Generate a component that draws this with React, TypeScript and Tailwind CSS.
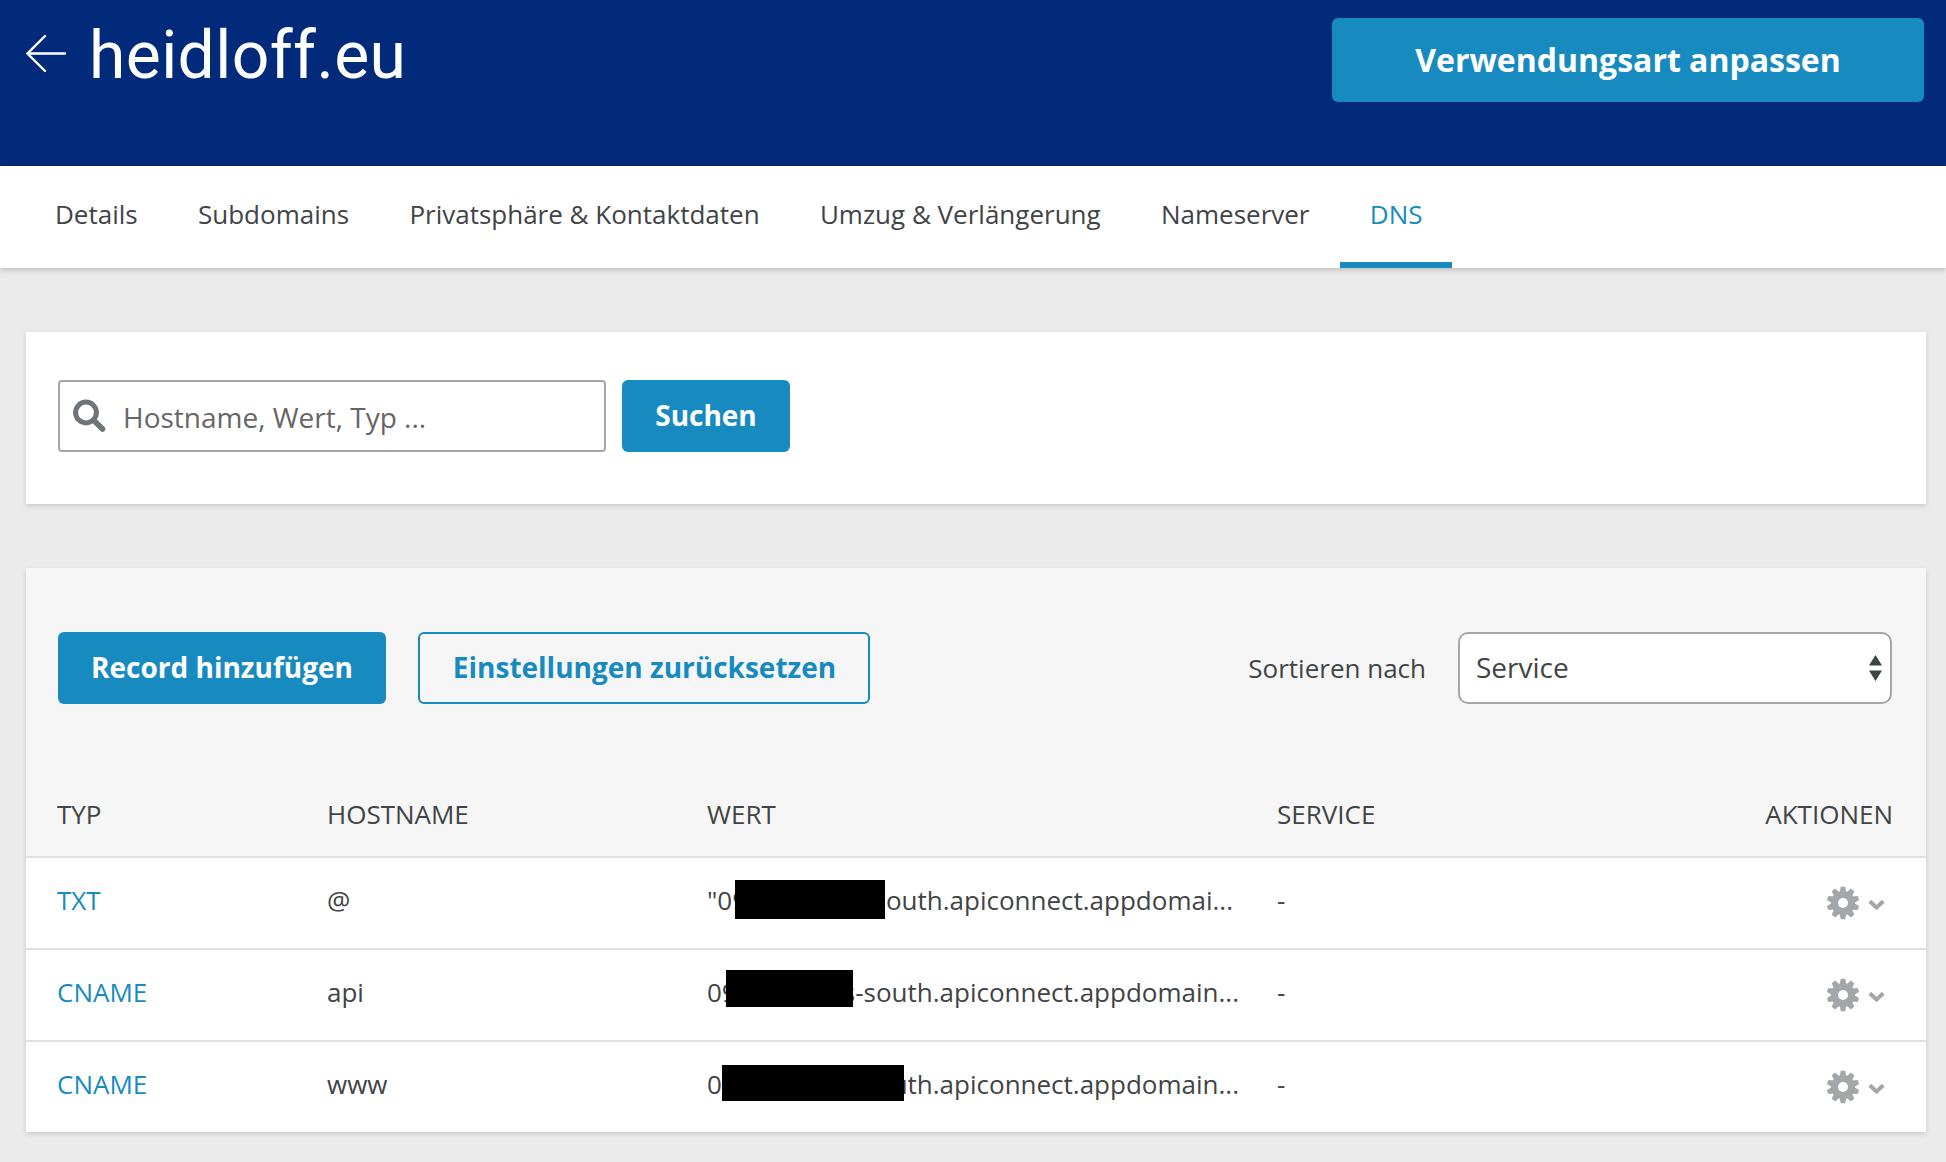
import React from "react";

const tabs = ["Details", "Subdomains", "Privatsphäre & Kontaktdaten", "Umzug & Verlängerung", "Nameserver", "DNS"];

const rows = [
  { typ: "TXT", host: "@", start: '"09', end: "outh.apiconnect.appdomai...", cell: "w-[526px]", block: "left-[28px] top-[22px] w-[150px] h-[39px]" },
  { typ: "CNAME", host: "api", start: "09", end: "s-south.apiconnect.appdomain...", cell: "w-[532px]", block: "left-[19px] top-[20px] w-[127px] h-[37px]" },
  { typ: "CNAME", host: "www", start: "0", end: "uth.apiconnect.appdomain...", cell: "w-[532px]", block: "left-[15px] top-[23px] w-[182px] h-[36px]" },
];

function Gear() {
  return (
    <svg width="34" height="34" viewBox="-17 -17 34 34" fill="#a3a7aa" fillRule="evenodd">
      <path d="M0-12A12 12 0 1 0 0 12A12 12 0 1 0 0-12ZM0-5A5 5 0 1 1 0 5A5 5 0 1 1 0-5Z" />
      {[0, 36, 72, 108, 144, 180, 216, 252, 288, 324].map((a) => (
        <path key={a} transform={`rotate(${a})`} d="M-3.4-10.5L-2.2-16.2H2.2L3.4-10.5Z" />
      ))}
    </svg>
  );
}

export default function App() {
  return (
    <div className="h-[1162px] w-[1946px] overflow-hidden bg-[#ebebeb] font-['Open_Sans',sans-serif] text-[26px] text-[#3f4447]">
      <header className="flex h-[166px] items-start justify-between bg-[#022a7a] pl-[26px] pr-[22px] pt-[18px] text-white">
        <div className="flex">
          <svg className="mt-[16px]" width="41" height="39" viewBox="0 0 41 39" fill="none" stroke="white" strokeWidth="2.4" strokeLinecap="round">
            <path d="M1.5 19.5H39M19 2L1.5 19.5L19 37" />
          </svg>
          <h1 className="ml-[22px] mt-[-4px] whitespace-nowrap font-['Roboto',sans-serif] text-[66px] leading-[84px] tracking-[0.4px] [font-variant-ligatures:none]">heidloff.eu</h1>
        </div>
        <button className="h-[84px] w-[592px] rounded-[6px] bg-[#178bc0] text-[32px] font-bold leading-[84px]">Verwendungsart anpassen</button>
      </header>
      <nav className="relative flex h-[102px] gap-[0.3px] bg-white pl-[25px] shadow-[0_2px_5px_rgba(0,0,0,0.2)]">
        {tabs.map((t) => (
          <a key={t} className={t === "DNS" ? "whitespace-nowrap border-b-[6px] border-[#178bc0] px-[30px] pt-[29px] text-[#178bc0]" : "whitespace-nowrap px-[30px] pt-[29px]"}>{t}</a>
        ))}
      </nav>
      <section className="ml-[26px] mt-[64px] flex h-[172px] w-[1900px] bg-white px-[32px] pt-[48px] shadow-[0_2px_5px_rgba(0,0,0,0.15)]">
        <div className="flex h-[72px] w-[548px] items-center rounded-[4px] border-2 border-[#a3a7aa] pl-[13px]">
          <svg width="34" height="34" viewBox="0 0 34 34" fill="none" stroke="#6f7477">
            <circle cx="13" cy="13.5" r="10.4" strokeWidth="5" />
            <path d="M21 21.5L29.5 30" strokeWidth="5.6" strokeLinecap="round" />
          </svg>
          <span className="ml-[16px] mt-[1px] text-[28px] text-[#666]">Hostname, Wert, Typ ...</span>
        </div>
        <button className="ml-[16px] h-[72px] w-[168px] rounded-[6px] bg-[#178bc0] pb-[2px] text-[28px] font-bold text-white">Suchen</button>
      </section>
      <section className="ml-[26px] mt-[64px] h-[564px] w-[1900px] bg-white shadow-[0_2px_5px_rgba(0,0,0,0.15)]">
        <div className="h-[288px] bg-[#f6f6f6] pt-[64px]">
          <div className="flex items-center pl-[32px] pr-[34px]">
            <button className="h-[72px] w-[328px] rounded-[6px] bg-[#178bc0] pb-[2px] text-[28px] font-bold text-white">Record hinzufügen</button>
            <button className="ml-[32px] h-[72px] w-[452px] rounded-[6px] border-2 border-[#178bc0] pb-[2px] pl-[1px] text-[28px] font-bold text-[#178bc0]">Einstellungen zurücksetzen</button>
            <span className="ml-auto">Sortieren nach</span>
            <div className="ml-[32px] flex h-[72px] w-[434px] items-center justify-between rounded-[10px] border-2 border-[#a3a7aa] bg-white pl-[16px] pr-[8px] text-[28px]">
              <span className="pb-[2px]">Service</span>
              <svg width="13" height="26" viewBox="0 0 13 26" fill="#3f4447"><path d="M0 10.5L6.5 0L13 10.5ZM0 15.5H13L6.5 26Z" /></svg>
            </div>
          </div>
          <div className="mt-[91px] flex pl-[31px] pr-[33px] leading-[38px]">
            <span className="w-[270px]">TYP</span>
            <span className="w-[380px]">HOSTNAME</span>
            <span className="w-[570px]">WERT</span>
            <span>SERVICE</span>
            <span className="ml-auto">AKTIONEN</span>
          </div>
        </div>
        {rows.map((r, i) => (
          <div key={i} className="flex h-[92px] border-t-2 border-[#dfdfdf] pl-[31px] pr-[41px] leading-[84px]">
            <a className="w-[270px] text-[#178bc0]">{r.typ}</a>
            <span className="w-[380px]">{r.host}</span>
            <div className="w-[570px]">
              <div className={`relative flex justify-between whitespace-nowrap ${r.cell}`}>
                <span>{r.start}</span>
                <span>{r.end}</span>
                <span className={`absolute bg-black ${r.block}`} />
              </div>
            </div>
            <span>-</span>
            <div className="ml-auto mt-[28px] flex h-[34px]">
              <Gear />
              <svg className="ml-[8px] mt-[13px]" width="17" height="12" viewBox="0 0 17 12" fill="none" stroke="#a3a7aa" strokeWidth="4"><path d="M1.8 2.2L8.5 8.6L15.2 2.2" /></svg>
            </div>
          </div>
        ))}
      </section>
    </div>
  );
}
